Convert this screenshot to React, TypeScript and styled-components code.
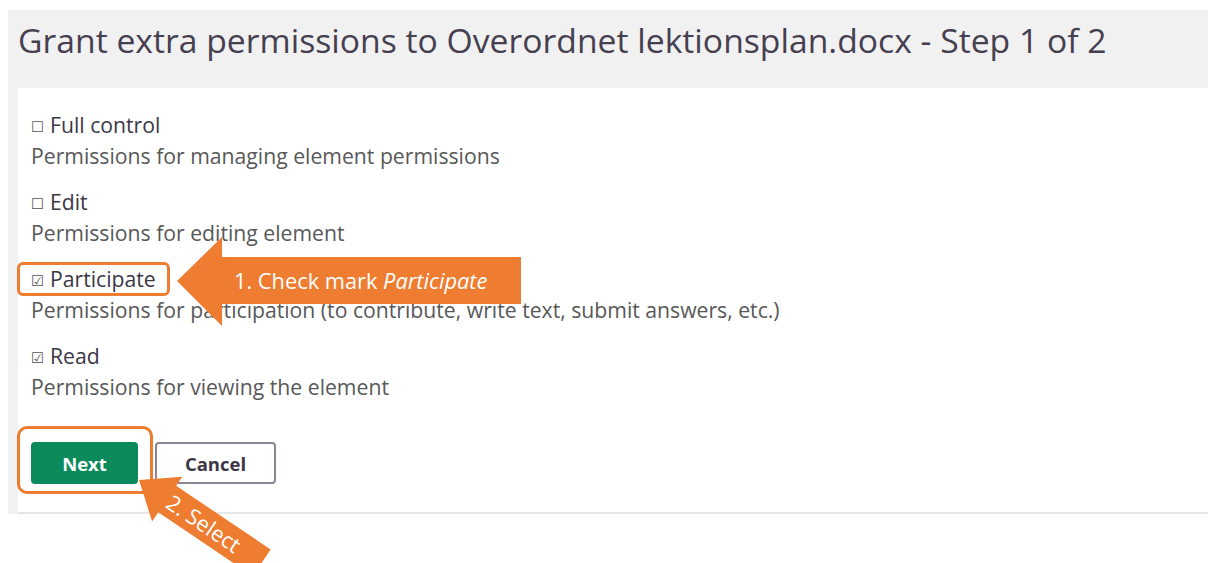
import React from "react";
import styled, { createGlobalStyle } from "styled-components";

const GlobalStyle = createGlobalStyle`
  html, body {
    margin: 0;
    padding: 0;
    background: #ffffff;
  }
  body {
    font-family: "Open Sans", "Noto Sans", Arial, sans-serif;
  }
`;

const ORANGE = "#ee7d31";

const Page = styled.div`
  position: relative;
  width: 1208px;
  height: 563px;
  overflow: hidden;
  padding: 10px 0 0 8px;
  box-sizing: border-box;
`;

const Panel = styled.section`
  background: #f1f1f1;
`;

const Header = styled.header`
  height: 78px;
  box-sizing: border-box;
  padding: 9px 0 0 10px;
`;

const Title = styled.h1`
  margin: 0;
  font-family: "Open Sans", sans-serif;
  font-weight: 400;
  font-size: 33.7px;
  line-height: 42px;
  color: #463f50;
  white-space: nowrap;
`;

const Card = styled.div`
  display: flex;
  flex-direction: column;
  align-items: flex-start;
  margin-left: 10px;
  background: #ffffff;
  border-bottom: 2px solid #e6e6e6;
  padding: 24px 0 28px 13px;
`;

const Option = styled.div`
  display: flex;
  flex-direction: column;
  align-items: flex-start;
  gap: 5px;
  margin-bottom: 20px;
`;

const Label = styled.label<{ $marked?: boolean }>`
  position: relative;
  display: inline-flex;
  align-items: center;
  gap: 6px;
  font-size: 21.2px;
  line-height: 26px;
  color: #3b3745;

  ${(p) =>
    p.$marked &&
    `
    &::before {
      content: "";
      position: absolute;
      top: -4px;
      bottom: -4px;
      left: -14px;
      right: -14px;
      border: 3px solid ${ORANGE};
      border-radius: 6px;
      pointer-events: none;
    }
  `}
`;

const Box = styled.span`
  font-family: "DejaVu Sans", sans-serif;
  font-size: 14.5px;
  line-height: 14px;
  color: #555;
  position: relative;
  top: 2px;
`;

const Description = styled.div`
  font-size: 21.2px;
  line-height: 26px;
  color: #585858;
`;

const Actions = styled.div`
  display: flex;
  gap: 17px;
  margin-top: 22px;
`;

const Spot = styled.span`
  position: relative;
  display: inline-flex;

  &::before {
    content: "";
    position: absolute;
    top: -16px;
    left: -14px;
    right: -15px;
    bottom: -10px;
    border: 3px solid ${ORANGE};
    border-radius: 10px;
    pointer-events: none;
  }
`;

const Button = styled.button<{ $primary?: boolean }>`
  height: 42px;
  box-sizing: border-box;
  border-radius: 4px;
  font-family: "Open Sans", sans-serif;
  font-weight: 700;
  font-size: 18.5px;
  cursor: pointer;
  ${(p) =>
    p.$primary
      ? `
    width: 107px;
    background: #0b8a5b;
    color: #ffffff;
    border: none;
  `
      : `
    width: 121px;
    background: #ffffff;
    color: #3b3745;
    border: 2px solid #8d8595;
  `}
`;

const Annotations = styled.svg`
  position: absolute;
  left: 0;
  top: 0;
  pointer-events: none;
`;

const CalloutText = styled.text`
  font-family: "Open Sans", sans-serif;
  font-size: 21.8px;
  fill: #ffffff;
`;

type Perm = { name: string; desc: string; checked: boolean; marked?: boolean };

const permissions: Perm[] = [
  { name: "Full control", desc: "Permissions for managing element permissions", checked: false },
  { name: "Edit", desc: "Permissions for editing element", checked: false },
  {
    name: "Participate",
    desc: "Permissions for participation (to contribute, write text, submit answers, etc.)",
    checked: true,
    marked: true,
  },
  { name: "Read", desc: "Permissions for viewing the element", checked: true },
];

export default function App() {
  return (
    <>
      <GlobalStyle />
      <Page>
        <Panel>
          <Header>
            <Title>Grant extra permissions to Overordnet lektionsplan.docx - Step 1 of 2</Title>
          </Header>
          <Card>
            {permissions.map((p) => (
              <Option key={p.name}>
                <Label $marked={p.marked}>
                  <Box>{p.checked ? "☑" : "☐"}</Box>
                  {p.name}
                </Label>
                <Description>{p.desc}</Description>
              </Option>
            ))}
            <Actions>
              <Spot>
                <Button $primary>Next</Button>
              </Spot>
              <Button>Cancel</Button>
            </Actions>
          </Card>
        </Panel>

        <Annotations width={1208} height={563} viewBox="0 0 1208 563">
          {/* callout 1: points left at the Participate option */}
          <polygon
            points="177,281 222,237 222,257 521,257 521,304 222,304 222,326"
            fill={ORANGE}
          />
          <CalloutText x={234} y={289}>
            1. Check mark <tspan fontStyle="italic">Participate</tspan>
          </CalloutText>

          {/* callout 2: diagonal arrow pointing at the Next button */}
          <g transform="translate(139 480) rotate(34)">
            <polygon points="0,0 34,-27 34,-16 148,-16 148,16 34,16 34,27" fill={ORANGE} />
            <CalloutText x={36} y={8}>
              2. Select
            </CalloutText>
          </g>
        </Annotations>
      </Page>
    </>
  );
}
